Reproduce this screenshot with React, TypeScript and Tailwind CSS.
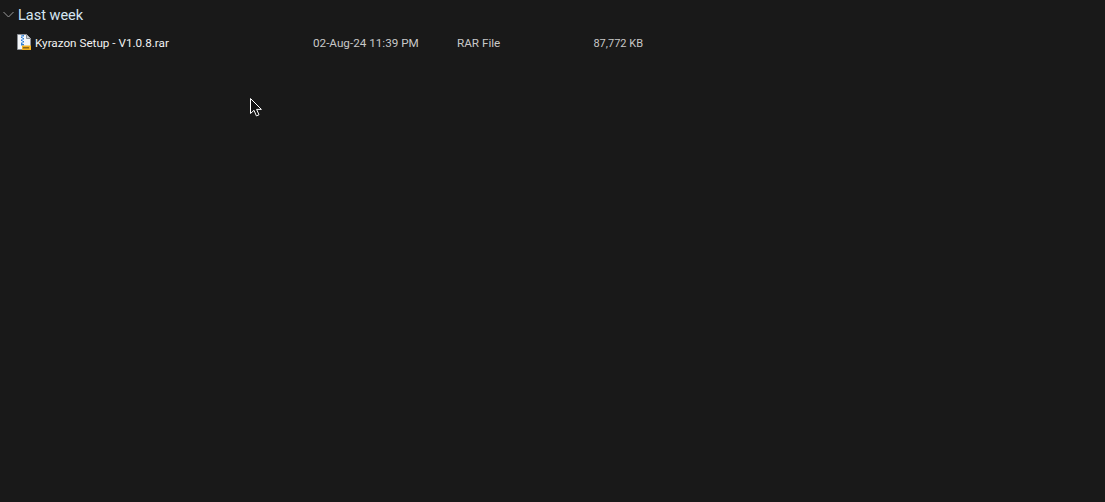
export default function App() {
  return (
    <div className="relative h-[502px] w-[1105px] overflow-hidden bg-[#191919] font-['Roboto',sans-serif] text-[11.7px]">
      {/* Group header */}
      <div className="flex h-[29px] items-center pl-[3px]">
        <svg className="h-[11px] w-[11px]" viewBox="0 0 11 11" fill="none" stroke="#9a9a9a" strokeWidth={1}>
          <path d="M0.5 3l5 5 5-5" />
        </svg>
        <span className="ml-1 pt-[4px] text-[14.5px] leading-none text-[#d6e6f2]">Last week</span>
      </div>

      {/* File row */}
      <div className="flex h-[30px] items-center">
        <div className="flex w-[313px] items-center pl-[17px]">
          <svg className="mb-[4px] h-4 w-[14px] shrink-0" viewBox="0 0 14 16">
            <path d="M0.5 0.5h9l4 4v11h-13z" fill="#f4f6f8" stroke="#8a8f96" />
            <path d="M9.5 0.5v4h4" fill="#c9ced4" stroke="#8a8f96" />
            <path d="M4 1h3v1.5H5.5V4H7v1.5H5.5V7H7v1.5H5.5V10H4V8.5h1.5V7H4V5.5h1.5V4H4V2.5h1.5V1.5H4z" fill="#2f7fd6" />
            <rect x="4" y="10" width="3" height="1.5" fill="#2f7fd6" />
            <rect x="5" y="11.5" width="9" height="4.5" fill="#f2b01e" />
            <path d="M6.5 13h1v1.5h-1zM8.5 13h1v1.5h-1zM10.5 13h1v1.5h-1z" fill="#2b2310" />
          </svg>
          <span className="ml-1 whitespace-nowrap text-[#f2f2f2]">Kyrazon Setup - V1.0.8.rar</span>
        </div>
        <span className="w-[144px] whitespace-nowrap text-[#c8c8c8]">02-Aug-24 11:39 PM</span>
        <span className="w-[80px] whitespace-nowrap text-[#c8c8c8]">RAR File</span>
        <span className="w-[106px] whitespace-nowrap text-right text-[11px] text-[#c8c8c8]">87,772 KB</span>
      </div>

      {/* Mouse pointer */}
      <svg className="absolute left-[250px] top-[98px] h-5 w-3" viewBox="0 0 12 20" fill="#111" stroke="#fff" strokeWidth={1}>
        <path d="M0.5 0.5v15l3.5-3.2 2.4 5.6 2.6-1.1-2.4-5.4h4.8z" />
      </svg>
    </div>
  );
}
